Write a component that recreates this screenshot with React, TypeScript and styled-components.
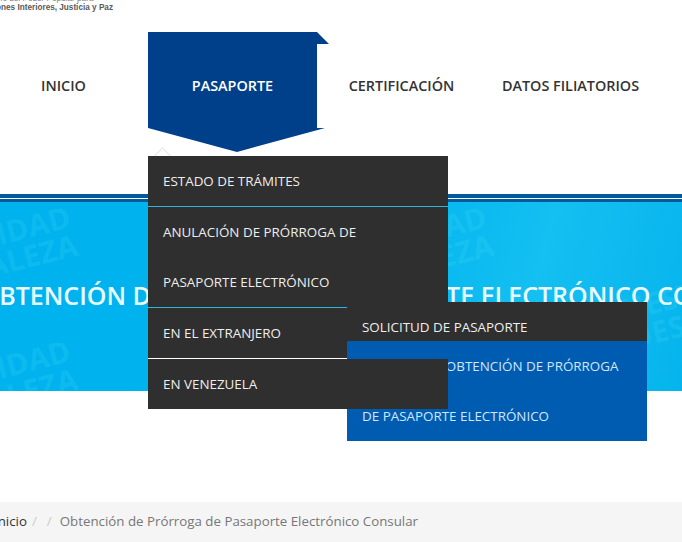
import styled, { createGlobalStyle } from "styled-components";

const GlobalStyle = createGlobalStyle`
  html, body {
    margin: 0;
    padding: 0;
    background: #ffffff;
  }
  * {
    box-sizing: border-box;
  }
`;

const Page = styled.div`
  width: 682px;
  height: 542px;
  overflow: hidden;
  position: relative;
  font-family: "Open Sans", "Liberation Sans", sans-serif;
  background: #ffffff;
`;

const LogoBar = styled.div`
  height: 32px;
  width: 113px;
  overflow: hidden;
  display: flex;
  justify-content: flex-end;
`;

const LogoText = styled.div`
  flex: none;
  margin-top: -6px;
  font-family: "Liberation Sans", Arial, sans-serif;
  font-size: 8.2px;
  line-height: 9px;
  font-weight: 700;
  color: #58595b;
  white-space: nowrap;
  & span {
    display: block;
    font-weight: 400;
    color: #808285;
  }
`;

const Nav = styled.nav`
  height: 162px;
  margin-left: -21px;
  display: flex;
  align-items: flex-start;
`;

const NavItem = styled.div<{ $active?: boolean }>`
  position: relative;
  flex: none;
  width: 169px;
  height: 106px;
  display: flex;
  align-items: center;
  justify-content: center;
  font-size: 14.4px;
  font-weight: 600;
  color: ${(p) => (p.$active ? "#ffffff" : "#333333")};
  ${(p) =>
    p.$active &&
    `
    &::before {
      content: "";
      position: absolute;
      left: 0;
      top: 0;
      width: 181px;
      height: 120px;
      background: #00408a;
      clip-path: polygon(0 0, 169px 0, 181px 12px, 169px 12px, 169px 96px, 177px 96px, 89px 120px, 0 96px);
    }
  `}
`;

const NavLabel = styled.span`
  position: relative;
`;

const Caret = styled.span`
  position: absolute;
  left: 8px;
  top: 118px;
  width: 13px;
  height: 13px;
  border-top: 1px solid #e6e6e6;
  border-left: 1px solid #e6e6e6;
  transform: rotate(45deg);
`;

const Dropdown = styled.ul`
  position: absolute;
  left: 0;
  top: 124px;
  width: 300px;
  margin: 0;
  padding: 0;
  list-style: none;
  z-index: 5;
`;

const DropItem = styled.li<{ $line?: string }>`
  position: relative;
  padding: 0 15px;
  background: #2f2f2f;
  color: #eeeeee;
  font-size: 13.4px;
  font-weight: 400;
  line-height: 50px;
  border-bottom: ${(p) => (p.$line ? `1px solid ${p.$line}` : "0")};
`;

const SubMenu = styled.ul`
  position: absolute;
  left: 199px;
  top: -6px;
  width: 300px;
  margin: 0;
  padding: 0;
  list-style: none;
`;

const SubItem = styled.li<{ $active?: boolean }>`
  padding: 0 15px;
  background: ${(p) => (p.$active ? "#005cb0" : "#2f2f2f")};
  color: ${(p) => (p.$active ? "#cfe6fb" : "#eeeeee")};
  line-height: 50px;
  height: ${(p) => (p.$active ? "100px" : "39px")};
`;

// part of a line that sits under the menu, squeezed so the visible rest lands right
const Squeezed = styled.span<{ $by: number }>`
  letter-spacing: ${(p) => p.$by}px;
`;

const Stripes = styled.div`
  height: 8px;
  border-top: 4px solid #005a9c;
  border-bottom: 3px solid #005a9c;
`;

const Banner = styled.div`
  position: relative;
  height: 189px;
  overflow: hidden;
  background: linear-gradient(105deg, #00b2ee 0%, #00b4ef 50%, #14bff1 76%, #06b4ed 100%);
  display: flex;
  align-items: center;
  justify-content: center;
`;

const Watermark = styled.div<{ $right: number; $y: number }>`
  position: absolute;
  left: ${(p) => p.$right - 240}px;
  top: ${(p) => p.$y}px;
  width: 240px;
  transform: rotate(-14deg);
  transform-origin: right bottom;
  font-size: 30px;
  line-height: 29px;
  font-weight: 700;
  color: rgba(70, 225, 245, 0.2);
  text-align: right;
  white-space: nowrap;
`;

const SideWatermark = styled(Watermark)`
  text-align: left;
`;

const BannerTitle = styled.h1`
  position: relative;
  flex: none;
  margin: -3px 0 0 88px;
  font-size: 25px;
  font-weight: 600;
  color: #e9fbff;
  white-space: nowrap;
`;

const Spacer = styled.div`
  height: 111px;
`;

const Breadcrumb = styled.div`
  height: 40px;
  padding-bottom: 2px;
  display: flex;
  align-items: center;
  background: #f5f5f5;
  font-size: 13.3px;
  color: #777777;
`;

const CrumbLink = styled.span`
  margin-left: -6px;
  color: #333333;
`;

const CrumbSep = styled.span`
  color: #cccccc;
  margin-left: 5px;
  margin-right: 5px;
`;

const CrumbLast = styled.span`
  margin-left: 3px;
`;

export default function App() {
  return (
    <Page>
      <GlobalStyle />
      <LogoBar>
        <LogoText>
          <span>Ministerio del Poder Popular para</span>
          Relaciones Interiores, Justicia y Paz
        </LogoText>
      </LogoBar>
      <Nav>
        <NavItem>INICIO</NavItem>
        <NavItem $active>
          <NavLabel>PASAPORTE</NavLabel>
          <Caret />
          <Dropdown>
            <DropItem $line="#30b4dc">ESTADO DE TRÁMITES</DropItem>
            <DropItem $line="#30b4dc">
              ANULACIÓN DE PRÓRROGA DE
              <br />
              PASAPORTE ELECTRÓNICO
            </DropItem>
            <DropItem $line="#ffffff">
              EN EL EXTRANJERO
              <SubMenu>
                <SubItem>SOLICITUD DE PASAPORTE</SubItem>
                <SubItem $active>
                  <Squeezed $by={-0.6}>SOLICITUD DE </Squeezed>
                  OBTENCIÓN DE PRÓRROGA
                  <br />
                  DE PASAPORTE ELECTRÓNICO
                </SubItem>
              </SubMenu>
            </DropItem>
            <DropItem>EN VENEZUELA</DropItem>
          </Dropdown>
        </NavItem>
        <NavItem>CERTIFICACIÓN</NavItem>
        <NavItem>DATOS FILIATORIOS</NavItem>
      </Nav>
      <Stripes />
      <Banner>
        <Watermark $right={80} $y={-2}>SOBERANIDAD<br />FORTALEZA</Watermark>
        <Watermark $right={80} $y={132}>SOBERANIDAD<br />FORTALEZA</Watermark>
        <Watermark $right={496} $y={-2}>SOBERANIDAD<br />FORTALEZA</Watermark>
        <SideWatermark $right={866} $y={34}>UESTRA<br />UESTRA</SideWatermark>
        <BannerTitle>
          OBTENCIÓN <Squeezed $by={-1}>DE PRÓRROGA DE PASAPO</Squeezed>RTE ELECTRÓNICO CONSULAR
        </BannerTitle>
      </Banner>
      <Spacer />
      <Breadcrumb>
        <CrumbLink>Inicio</CrumbLink>
        <CrumbSep>/</CrumbSep>
        <CrumbSep>/</CrumbSep>
        <CrumbLast>Obtención de Prórroga de Pasaporte Electrónico Consular</CrumbLast>
      </Breadcrumb>
    </Page>
  );
}
